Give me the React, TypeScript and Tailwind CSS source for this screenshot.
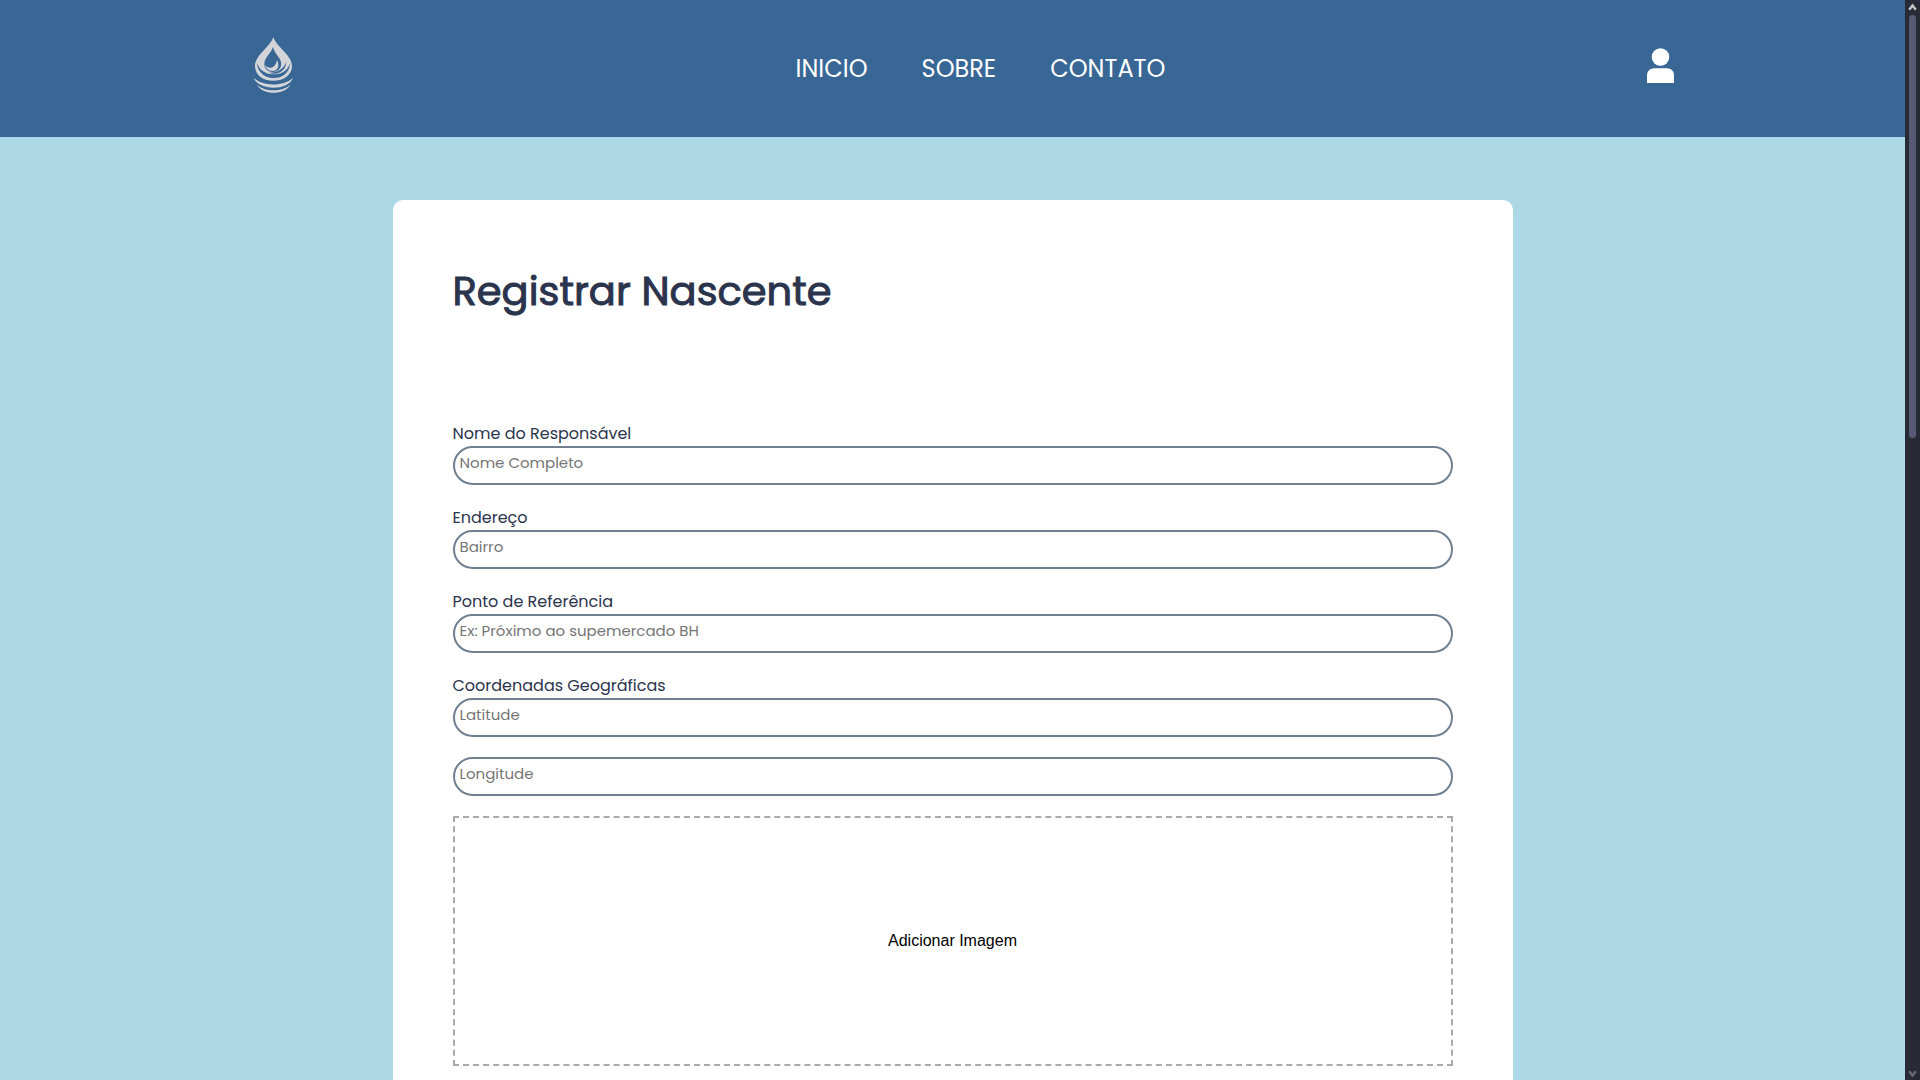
import type { ReactNode } from "react";

function DropLogo() {
  return (
    <svg viewBox="0 0 210 240" className="h-20 w-[70px]" fill="#d3d5d9" aria-hidden="true">
      <path d="M100 36C92 65 45 90 45 123C45 150 68 167 100 167C132 167 156 150 156 123C156 90 108 65 100 36Z" />
      <g fill="#386796">
        <path d="M50 113C54 147 80 159 101 159C126 159 148 145 151 113C142 139 123 148 101 148C79 148 59 137 50 113Z" />
        <path d="M99 66C94 84 73 96 73 117C73 133 86 141 98 141C114 141 126 130 123 111C120 97 104 86 99 66Z" />
        <path d="M86 143C108 153 137 141 139 112C129 134 112 144 86 143Z" />
      </g>
      <path d="M75 121C87 134 107 130 111 104C121 124 112 138 97 138C86 138 78 131 75 121Z" />
      <path d="M41 158C66 185 134 185 159 158C146 198 54 198 41 158Z" />
      <path d="M51 179C74 201 127 201 151 179C134 211 68 211 51 179Z" />
    </svg>
  );
}

function UserIcon() {
  return (
    <svg viewBox="0 0 28 36" className="h-9 w-7" fill="white" aria-hidden="true">
      <circle cx="13.5" cy="9" r="8.8" />
      <path d="M0 35V27.5C0 23 3 20.2 7.500 20.2H19.500C24 20.2 27 23 27 27.500V35Z" />
    </svg>
  );
}

function TextBox({ id, placeholder, label }: { id: string; placeholder: string; label?: string }) {
  return (
    <input
      id={id}
      type="text"
      placeholder={placeholder}
      aria-label={label}
      className="block h-[39px] w-full rounded-full border-2 border-[#708090] bg-white px-[5px] pb-1.5 text-[15px] text-[#2b344d] placeholder:text-[#757575]"
    />
  );
}

function Field({ id, label, children }: { id: string; label: string; children: ReactNode }) {
  return (
    <div>
      <label htmlFor={id} className="block text-base leading-[25px]">
        {label}
      </label>
      {children}
    </div>
  );
}

export default function App() {
  return (
    <div className="flex h-screen bg-[#add8e6] font-['Poppins','Inter',sans-serif] text-[#2b344d]">
      <div className="min-w-0 flex-1 overflow-hidden">
        <header className="flex h-[137px] items-center justify-between bg-[#386796] pr-[230px] pl-60">
          <a href="#inicio" aria-label="Página inicial" className="pr-1 pb-2">
            <DropLogo />
          </a>
          <nav className="flex gap-[54px] text-2xl text-white">
            <a href="#inicio">INICIO</a>
            <a href="#sobre">SOBRE</a>
            <a href="#contato">CONTATO</a>
          </nav>
          <button type="button" aria-label="Conta" className="pb-1.5">
            <UserIcon />
          </button>
        </header>
        <main className="px-6 pt-[63px]">
          <form className="mx-auto max-w-[1120px] rounded-[10px] bg-white p-[60px]">
            <h1 className="mb-[99px] text-[40px] leading-[62px] font-normal [-webkit-text-stroke:1px_#2b344d]">
              Registrar Nascente
            </h1>
            <div className="flex flex-col gap-5">
              <Field id="nome" label="Nome do Responsável">
                <TextBox id="nome" placeholder="Nome Completo" />
              </Field>
              <Field id="endereco" label="Endereço">
                <TextBox id="endereco" placeholder="Bairro" />
              </Field>
              <Field id="referencia" label="Ponto de Referência">
                <TextBox id="referencia" placeholder="Ex: Próximo ao supemercado BH" />
              </Field>
              <Field id="latitude" label="Coordenadas Geográficas">
                <TextBox id="latitude" placeholder="Latitude" />
              </Field>
              <TextBox id="longitude" placeholder="Longitude" label="Longitude" />
              <button
                type="button"
                className="h-[250px] w-full border-2 border-dashed border-[#aaaaaa] font-['Liberation_Sans',sans-serif] text-base text-black"
              >
                Adicionar Imagem
              </button>
            </div>
          </form>
        </main>
      </div>
      <div className="flex w-[15px] flex-col items-center bg-[#282a36]" aria-hidden="true">
        <svg viewBox="0 0 15 15" className="h-[15px] w-[15px]" fill="none" stroke="#c4c4c4" strokeWidth="2.4">
          <path d="M4.2 9.8 7.5 5.5 10.8 9.8" />
        </svg>
        <div className="w-[7px] flex-1">
          <div className="h-[423px] rounded-full bg-[#565a75]" />
        </div>
        <svg viewBox="0 0 15 15" className="h-[15px] w-[15px]" fill="none" stroke="#686973" strokeWidth="2.4">
          <path d="M4.2 6.2 7.5 10.5 10.8 6.2" />
        </svg>
      </div>
    </div>
  );
}
